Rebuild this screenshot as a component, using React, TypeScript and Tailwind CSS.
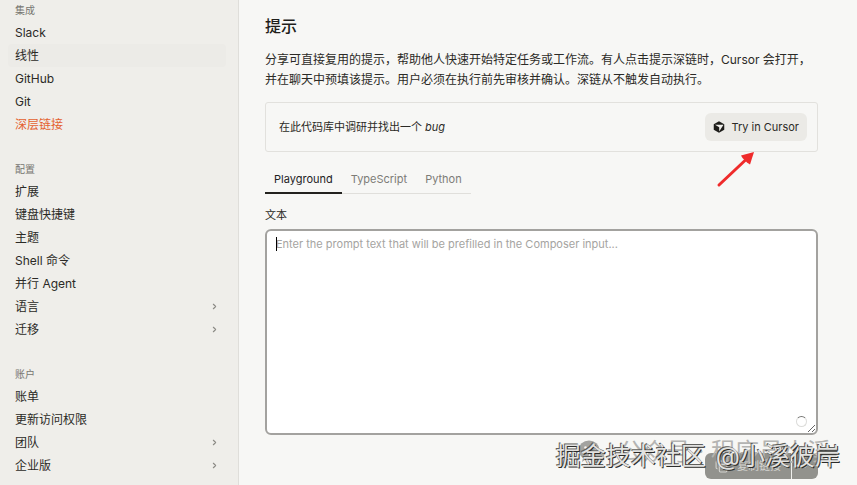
import React from "react";
import { ChevronDown, ChevronRight, Copy } from "lucide-react";

type NavItem = { label: string; expandable?: boolean; state?: "active" | "hover" };
type NavGroup = { title: string; items: NavItem[] };

const groups: NavGroup[] = [
  {
    title: "集成",
    items: [
      { label: "Slack" },
      { label: "线性", state: "hover" },
      { label: "GitHub" },
      { label: "Git" },
      { label: "深层链接", state: "active" },
    ],
  },
  {
    title: "配置",
    items: [
      { label: "扩展" },
      { label: "键盘快捷键" },
      { label: "主题" },
      { label: "Shell 命令" },
      { label: "并行 Agent" },
      { label: "语言", expandable: true },
      { label: "迁移", expandable: true },
    ],
  },
  {
    title: "账户",
    items: [
      { label: "账单" },
      { label: "更新访问权限" },
      { label: "团队", expandable: true },
      { label: "企业版", expandable: true },
    ],
  },
];

function Sidebar() {
  return (
    <nav className="flex w-[239px] shrink-0 flex-col gap-[23px] border-r border-[#dfdeda] bg-[#efeeea] pr-3 pl-2">
      {groups.map((group) => (
        <section key={group.title}>
          <h2 className="flex h-5 items-center px-[7px] text-[10px] text-[#777671]">{group.title}</h2>
          <ul className="mt-px">
            {group.items.map((item) => (
              <li key={item.label}>
                <a
                  href="#"
                  className={`flex h-[23px] items-center justify-between rounded px-[7px] text-xs ${
                    item.state === "active" ? "text-[#e4612f]" : "text-[#2b2a26]"
                  } ${item.state === "hover" ? "bg-[#ecebe7]" : ""}`}
                >
                  {item.label}
                  {item.expandable && <ChevronRight size={9} strokeWidth={3} className="text-[#8b8a85]" />}
                </a>
              </li>
            ))}
          </ul>
        </section>
      ))}
    </nav>
  );
}

function CursorLogo() {
  return (
    <svg width="12" height="12" viewBox="0 0 24 24" aria-hidden="true">
      <path d="M12 0.5 22.5 6.3v11.4L12 23.5 1.5 17.7V6.3Z" fill="#1d1c19" />
      <path d="M4 7.6h17L12.4 21v-8.5Z" fill="#efeeea" />
    </svg>
  );
}

function RedArrow() {
  return (
    <svg
      className="pointer-events-none absolute top-[48px] right-[62px]"
      width="40"
      height="37"
      viewBox="0 0 40 37"
      aria-hidden="true"
    >
      <path d="M4 34 30 9.5" stroke="#ef2b2b" strokeWidth="3" strokeLinecap="round" />
      <path d="M39 1 35 13.5 32 11.5 27.5 7 26 4.5Z" fill="#ef2b2b" />
    </svg>
  );
}

function Watermarks() {
  return (
    <div className="pointer-events-none absolute right-[17px] bottom-[11px] whitespace-nowrap">
      <div className="absolute right-[9px] bottom-[6px] flex items-center gap-[14px] text-[24px] leading-8 text-[#b4b4b2]">
        <svg width="27" height="25" viewBox="0 0 27 25" aria-hidden="true">
          <ellipse cx="11" cy="10" rx="10.5" ry="9.5" fill="#a3a3a0" />
          <ellipse cx="19" cy="17" rx="8" ry="7" fill="#adadaa" stroke="#f4f4f2" strokeWidth="1" />
          <path d="M5 18 4 22l4-3Z" fill="#a3a3a0" />
          <circle cx="7.5" cy="7.5" r="1.3" fill="#f4f4f2" />
          <circle cx="14.5" cy="7.5" r="1.3" fill="#f4f4f2" />
        </svg>
        <span>公众号 · 程序员小溪</span>
      </div>
      <div className="relative flex gap-[10px] text-[25px] leading-9 text-[#e2e2e0] [text-shadow:1px_1px_0_#2c2c2a,-1px_-1px_0_#5f5f5c]">
        <span>掘金技术社区</span>
        <span>@小溪彼岸</span>
      </div>
    </div>
  );
}

export default function App() {
  return (
    <div className="relative flex min-h-screen overflow-hidden bg-[#f7f7f5] font-['Inter','Noto_Sans_CJK_SC',sans-serif] text-[#2b2a26]">
      <Sidebar />
      <main className="min-w-0 flex-1 pt-[14px] pr-[39px] pl-[26px]">
        <h1 className="text-base leading-6 font-medium text-[#1f1e1b]">提示</h1>
        <p className="mt-3 text-xs leading-5">
          分享可直接复用的提示，帮助他人快速开始特定任务或工作流。有人点击提示深链时，Cursor 会打开，并在聊天中预填该提示。用户必须在执行前先审核并确认。深链从不触发自动执行。
        </p>

        <div className="relative mt-3 flex h-[50px] items-center justify-between rounded-[3px] border border-[#e2e1dd] pr-[10px] pl-[13px] text-[11px]">
          <p>
            在此代码库中调研并找出一个 <em>bug</em>
          </p>
          <button
            type="button"
            className="flex h-7 items-center gap-[6px] rounded-md bg-[#ebeae6] px-2 text-[#2b2a26]"
          >
            <CursorLogo />
            Try in Cursor
          </button>
          <RedArrow />
        </div>

        <div role="tablist" className="mt-[14px] flex h-7 w-fit border-b border-[#e0dfdb] text-[11px] text-[#7d7c77]">
          <button
            type="button"
            role="tab"
            aria-selected="true"
            className="-mb-px border-b-2 border-[#23221e] px-[9px] text-[#23221e]"
          >
            Playground
          </button>
          <button type="button" role="tab" aria-selected="false" className="px-[9px]">
            TypeScript
          </button>
          <button type="button" role="tab" aria-selected="false" className="px-[9px]">
            Python
          </button>
        </div>

        <label htmlFor="prompt" className="mt-[11px] block text-[11px] leading-5">
          文本
        </label>
        <div className="relative mt-1">
          <textarea
            id="prompt"
            placeholder="Enter the prompt text that will be prefilled in the Composer input..."
            className="block h-[206px] w-full rounded-md border-2 border-[#a3a29f] bg-white px-[9px] py-1 text-[11px] leading-[18px] outline-none placeholder:text-[#a5a4a1]"
          />
          <span className="absolute top-2 left-[11px] h-[14px] w-px bg-black" />
          <span className="absolute right-[11px] bottom-2 size-[11px] rounded-full border border-[#dcdcda] border-t-[#777774]" />
        </div>

        <div className="mt-[18px] flex justify-end">
          <div className="flex h-[26px] overflow-hidden rounded-md bg-[#92928d] text-[11px] text-[#d4d4d0]">
            <button type="button" className="flex items-center gap-[9px] border-r border-[#f0f0ed] px-[10px]">
              <Copy size={13} strokeWidth={2} />
              复制链接
            </button>
            <button type="button" aria-label="更多选项" className="flex w-[26px] items-center justify-center">
              <ChevronDown size={12} />
            </button>
          </div>
        </div>
      </main>
      <Watermarks />
    </div>
  );
}
